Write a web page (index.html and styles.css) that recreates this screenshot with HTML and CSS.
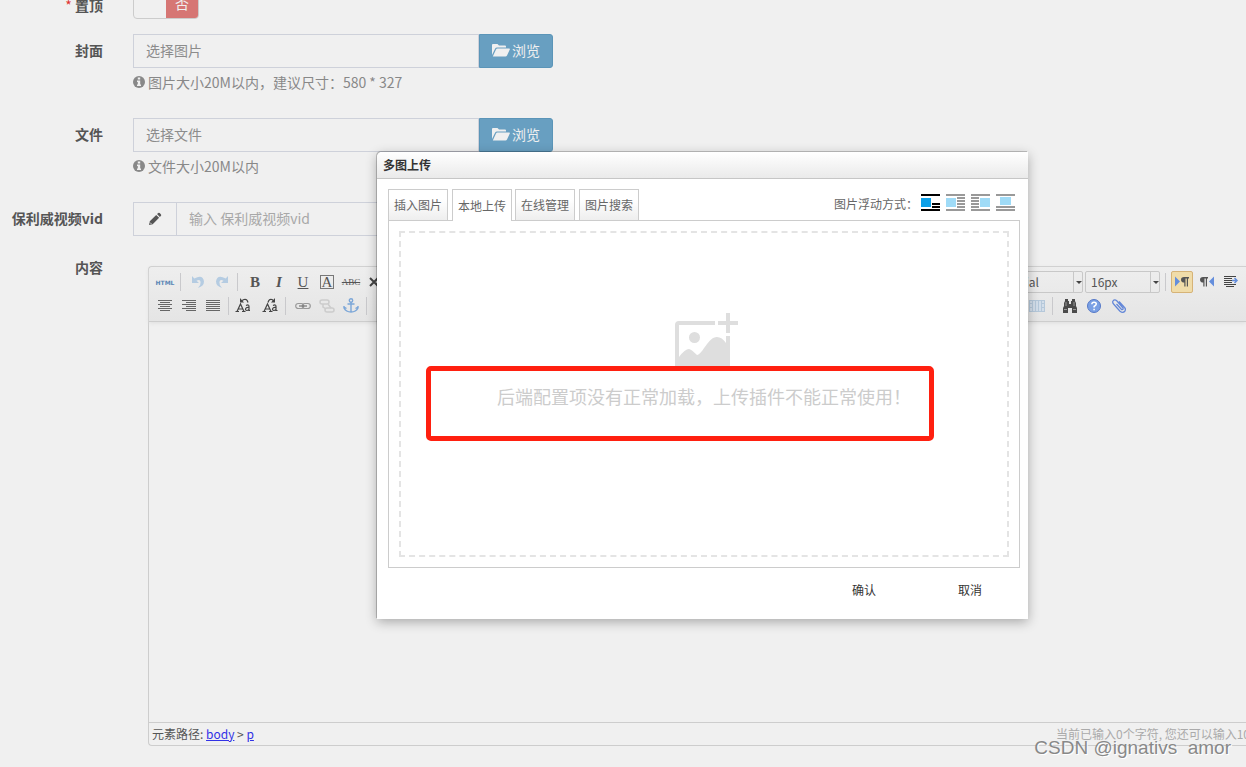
FILE: index.html
```html
<!DOCTYPE html>
<html lang="zh-CN">
<head>
<meta charset="utf-8">
<title>多图上传</title>
<link rel="stylesheet" href="styles.css">
</head>
<body>
<svg class="defs" aria-hidden="true">
  <symbol id="folder" viewBox="0 0 18 14"><path d="M0 12V2Q0 1 1 1H5.500L7 2.500H13Q14 2.500 14 3.500V4.500H5Q3.800 4.500 3.200 5.500Z"/><path d="M.8 13.500L4 6.500Q4.400 5.500 5.500 5.500H17.200Q18.200 5.500 17.800 6.500L15 12.500Q14.500 13.500 13.500 13.500Z"/></symbol>
  <symbol id="info" viewBox="0 0 12 12"><circle cx="6" cy="6" r="6"/><path fill="#f0f0f0" d="M4.800 1.500H7.200V3.500H4.800ZM4 4.500H7.200V8.500H8V10H4V8.500H4.800V6H4Z"/></symbol>
</svg>

<main class="page">
  <form class="form">
    <div class="row row-switch">
      <label class="label" for="top"><span class="required">*</span> 置顶</label>
      <div class="field"><button type="button" id="top" class="switch" aria-pressed="false"><span></span><span class="switch-off">否</span></button></div>
    </div>
    <div class="row">
      <label class="label" for="cover">封面</label>
      <div class="field">
        <div class="group">
          <input id="cover" class="input" type="text" placeholder="选择图片">
          <button type="button" class="browse"><svg width="18" height="14"><use href="#folder"/></svg>浏览</button>
        </div>
        <p class="help"><svg width="12" height="12"><use href="#info"/></svg>图片大小20M以内，建议尺寸：580 * 327</p>
      </div>
    </div>
    <div class="row">
      <label class="label" for="file">文件</label>
      <div class="field">
        <div class="group">
          <input id="file" class="input" type="text" placeholder="选择文件">
          <button type="button" class="browse"><svg width="18" height="14"><use href="#folder"/></svg>浏览</button>
        </div>
        <p class="help"><svg width="12" height="12"><use href="#info"/></svg>文件大小20M以内</p>
      </div>
    </div>
    <div class="row">
      <label class="label" for="vid">保利威视频vid</label>
      <div class="field">
        <div class="group">
          <span class="addon"><svg width="14" height="14" viewBox="0 0 14 14"><path fill="#555" d="M1 13L1.800 9.300L8.200 2.900L11.100 5.800L4.700 12.200ZM9 2.100L10.300 .9Q11 .5 11.700 1.100L13 2.400Q13.500 3 13 3.700L11.900 5Z"/><path d="M2 10.500L3.500 12" stroke="#f0f0f0" stroke-width=".8"/></svg></span>
          <input id="vid" class="input input-light" type="text" placeholder="输入 保利威视频vid">
        </div>
      </div>
    </div>
    <div class="row">
      <span class="label">内容</span>
      <div class="field">
        <div class="editor">
          <div class="toolbar">
            <div class="tools">
              <div class="tool-row">
                <button type="button" class="tool tool-html">HTML</button>
                <i class="sep"></i>
                <button type="button" class="tool" aria-label="撤销"><svg width="16" height="16" viewBox="0 0 16 16"><path fill="#b5cce2" d="M2 2V9H9L6.500 6.800Q10 4.500 10.600 8Q11 11 8 14Q14 12 14 7.500Q13 0 4.300 4.500Z"/></svg></button>
                <button type="button" class="tool" aria-label="重做"><svg width="16" height="16" viewBox="0 0 16 16"><path fill="#b5cce2" d="M14 2V9H7L9.500 6.800Q6 4.500 5.400 8Q5 11 8 14Q2 12 2 7.500Q3 0 11.700 4.500Z"/></svg></button>
                <i class="sep"></i>
                <button type="button" class="tool serif"><b>B</b></button>
                <button type="button" class="tool serif"><b><em>I</em></b></button>
                <button type="button" class="tool serif"><u>U</u></button>
                <button type="button" class="tool serif"><span class="boxed">A</span></button>
                <button type="button" class="tool serif"><s>ABC</s></button>
                <button type="button" class="tool" aria-label="清除格式"><svg width="16" height="16" viewBox="0 0 16 16"><path d="M3 4L11 12M11 4L3 12" stroke="#444" stroke-width="2"/></svg></button>
              </div>
              <div class="tool-row">
                <button type="button" class="tool" aria-label="居中"><svg width="16" height="16" viewBox="0 0 16 16"><path d="M1 2.500H15M3 4.500H13M1 6.500H15M3 8.500H13M1 10.500H15M3 12.500H13" stroke="#666"/></svg></button>
                <button type="button" class="tool" aria-label="居右"><svg width="16" height="16" viewBox="0 0 16 16"><path d="M1 2.500H15M5 4.500H15M1 6.500H15M5 8.500H15M1 10.500H15M5 12.500H15" stroke="#666"/></svg></button>
                <button type="button" class="tool" aria-label="两端对齐"><svg width="16" height="16" viewBox="0 0 16 16"><path d="M1 2.500H15M1 4.500H15M1 6.500H15M1 8.500H15M1 10.500H15M1 12.500H15" stroke="#666"/></svg></button>
                <i class="sep"></i>
                <button type="button" class="tool" aria-label="字母大写"><svg width="22" height="16" viewBox="0 0 22 16"><g fill="none" stroke="#444" stroke-width="1.200"><path d="M2 13.500L5.500 6L9 13.500M3.500 11H8M.5 13.500H4M7 13.500H10.500M11 7.500Q14 6 14 8.500V13M14 9.500Q10.500 9 10.500 11.500Q11.500 13.500 14 11.500M14 12.500H15M13 4.500Q12 .5 9 1.500L6 3"/></g><path fill="#444" d="M5 0V4.500H9Z"/></svg></button>
                <button type="button" class="tool" aria-label="字母小写"><svg width="22" height="16" viewBox="0 0 22 16"><g fill="none" stroke="#444" stroke-width="1.200"><path d="M5 13.500L8.500 6L12 13.500M6.500 11H11M3.500 13.500H7M10 13.500H13.500M14 7.500Q17 6 17 8.500V13M17 9.500Q13.500 9 13.500 11.500Q14.500 13.500 17 11.500M17 12.500H18.500M9 4.500Q10 .5 13 1.500L15 3"/></g><path fill="#444" d="M16 0V4.500H12Z"/></svg></button>
                <i class="sep"></i>
                <button type="button" class="tool" aria-label="超链接"><svg width="16" height="16" viewBox="0 0 16 16"><g fill="none" stroke="#999" stroke-width="1.200"><rect x=".7" y="5.500" width="8" height="5" rx="2.500"/><rect x="7.300" y="5.500" width="8" height="5" rx="2.500"/><path d="M4 8H12" stroke="#777"/></g></svg></button>
                <button type="button" class="tool" aria-label="取消链接"><svg width="16" height="16" viewBox="0 0 16 16"><g fill="none" stroke="#ccc" stroke-width="1.500"><rect x="1" y="2" width="9" height="4" rx="2"/><rect x="6" y="10" width="9" height="4" rx="2"/><path d="M4 6V9L7 11M9 6L12 10"/></g></svg></button>
                <button type="button" class="tool" aria-label="锚点"><svg width="16" height="16" viewBox="0 0 16 16"><g fill="none" stroke="#7ba6d8" stroke-width="1.400"><circle cx="8" cy="2.500" r="1.700"/><path d="M8 4V14M4.500 6H11.500M1 8V10Q3 14 8 14Q13 14 15 10V8M1 9L3.500 10.500M15 9L12.500 10.500"/></g></svg></button>
                <i class="sep"></i>
              </div>
            </div>
            <div class="tools tools-end">
              <div class="tool-row">
                <span class="combo combo-font"><select aria-label="字体"><option>arial</option></select></span>
                <span class="combo combo-size"><select aria-label="字号"><option>16px</option></select></span>
                <i class="sep"></i>
                <button type="button" class="tool tool-active" aria-label="从左向右"><svg width="16" height="16" viewBox="0 0 16 16"><path fill="#648edc" d="M1 2.500L6 7.500L1 12.500Z"/><path fill="#555" d="M15 3V4.500H14V12.500H12.800V4.500H11.500V12.500H10.300V8.500Q7 8.500 7 5.700Q7 3 10 3Z"/></svg></button>
                <button type="button" class="tool" aria-label="从右向左"><svg width="16" height="16" viewBox="0 0 16 16"><path fill="#648edc" d="M15 2.500L10 7.500L15 12.500Z"/><path fill="#555" d="M9 3V4.500H8V12.500H6.800V4.500H5.500V12.500H4.300V8.500Q1 8.500 1 5.700Q1 3 4 3Z"/></svg></button>
                <button type="button" class="tool" aria-label="首行缩进"><svg width="16" height="16" viewBox="0 0 16 16"><path d="M1 2.500H13M1 4.500H9M1 6.500H9M1 8.500H9M1 10.500H13M3 12.500H11" stroke="#444"/><path d="M9 6.500H14M11.500 4L14 6.500L11.500 9" fill="none" stroke="#648edc" stroke-width="1.500"/></svg></button>
              </div>
              <div class="tool-row tool-row-inset">
                <button type="button" class="tool" aria-label="表格"><svg width="16" height="14" viewBox="0 0 16 14"><path fill="#d3deea" d="M0 1H16V13H0Z"/><path d="M.5 1V13M3.500 1V13M6.500 1V13M9.500 1V13M12.500 1V13M15.500 1V13M0 1.500H16M0 12.500H16M0 4.500H3M13 4.500H16M0 8.500H3M13 8.500H16" stroke="#b5c8da"/></svg></button>
                <i class="sep"></i>
                <button type="button" class="tool" aria-label="查询替换"><svg width="16" height="16" viewBox="0 0 16 16"><path fill="#4b4b4b" d="M3 1H6V3H7V6H9V3H10V1H13V3L14 5V8L15 10V15H10V10H6V15H1V10L2 8V5L3 3Z"/><path d="M2 11.500H5M11 11.500H14M4 4V8M12 4V8" stroke="#999"/></svg></button>
                <button type="button" class="tool" aria-label="帮助"><svg width="16" height="16" viewBox="0 0 16 16"><circle cx="8" cy="8" r="6.500" fill="#7aa0e4" stroke="#5679c8"/><path d="M5.800 6.300Q6 4.200 8 4.200Q10.300 4.200 10.300 6Q10.300 7.200 8.100 8.500V9.500M8.100 10.700V12.200" fill="none" stroke="#fff" stroke-width="1.500"/></svg></button>
                <button type="button" class="tool" aria-label="附件"><svg width="16" height="16" viewBox="0 0 16 16"><path d="M6.500 6L11.500 11.500Q13.500 12 13 10L7 3Q4.500 .8 3 3Q2 4.500 4 6.500L10 13.300Q13 15.500 15 13Q16 11 14.500 9.500L9 3.500" fill="none" stroke="#6387d8" stroke-width="1.300"/></svg></button>
              </div>
            </div>
          </div>
          <div class="canvas" contenteditable="true" role="textbox" aria-label="内容"></div>
          <div class="status">
            <span>元素路径: <a href="#body">body</a> &gt; <a href="#p">p</a></span>
            <span class="count">当前已输入0个字符, 您还可以输入10</span>
          </div>
        </div>
      </div>
    </div>
  </form>

  <section class="dialog" role="dialog" aria-labelledby="dialog-title">
    <h2 id="dialog-title" class="dialog-title">多图上传</h2>
    <div class="dialog-body">
      <div class="dialog-head">
        <div class="tabs" role="tablist">
          <button type="button" role="tab" class="tab">插入图片</button>
          <button type="button" role="tab" class="tab tab-on" aria-selected="true">本地上传</button>
          <button type="button" role="tab" class="tab">在线管理</button>
          <button type="button" role="tab" class="tab">图片搜索</button>
        </div>
        <div class="float">
          <span class="float-label">图片浮动方式：</span>
          <button type="button" class="float-btn" aria-label="无浮动"><svg width="19" height="17"><path d="M0 0H19V2H0ZM11 9H19V11H11ZM11 12H19V14H11ZM0 15H19V17H0Z"/><path fill="#0da0e8" d="M0 4H10V13H0Z"/></svg></button>
          <button type="button" class="float-btn" aria-label="左浮动"><svg width="19" height="17"><path fill="#999" d="M0 0H19V2H0ZM11 3H19V5H11ZM11 6H19V8H11ZM11 9H19V11H11ZM11 12H19V14H11ZM0 15H19V17H0Z"/><path fill="#9fdbf7" d="M0 4H10V13H0Z"/></svg></button>
          <button type="button" class="float-btn" aria-label="右浮动"><svg width="19" height="17"><path fill="#999" d="M0 0H19V2H0ZM0 3H8V5H0ZM0 6H8V8H0ZM0 9H8V11H0ZM0 12H8V14H0ZM0 15H19V17H0Z"/><path fill="#9fdbf7" d="M9 4H19V13H9Z"/></svg></button>
          <button type="button" class="float-btn" aria-label="居中"><svg width="19" height="17"><path fill="#999" d="M0 0H19V2H0ZM0 12H19V14H0ZM0 15H19V17H0Z"/><path fill="#9fdbf7" d="M4 3H15V11H4Z"/></svg></button>
        </div>
      </div>
      <div class="panel">
        <div class="drop">
          <svg class="picture" width="70" height="54" viewBox="-6 0 70 54"><path fill="#dedede" d="M0 54V12Q0 8 4 8H40V12H4V44Q10 36 14 36Q16 36 22 42C28 41 33 24 42 24Q47 24 51 30V23H55V54ZM51 0H55V8H63V12H55V20H51V12H43V8H51Z"/><circle cx="19.500" cy="24.500" r="5.500" fill="#dedede"/></svg>
          <p class="message">后端配置项没有正常加载，上传插件不能正常使用！</p>
        </div>
      </div>
      <div class="actions">
        <button type="button" class="action">确认</button>
        <button type="button" class="action">取消</button>
      </div>
    </div>
    <div class="highlight"></div>
  </section>
  <div class="watermark">CSDN @ignativs&nbsp; amor</div>
</main>
</body>
</html>
```
FILE: styles.css
```css
* { box-sizing: border-box; }
body {
  margin: 0;
  background: #f0f0f0;
  color: #555;
  font: 14px/20px "Noto Sans CJK SC", sans-serif;
}
button, input, select { font: inherit; color: inherit; margin: 0; }
button { padding: 0; border: 0; background: none; }
.defs { position: absolute; width: 0; height: 0; }
.page { position: relative; min-height: 100vh; overflow: hidden; }

/* form */
.form { display: flex; flex-direction: column; gap: 15px; margin-top: -11px; }
.row { display: flex; align-items: flex-start; gap: 30px; }
.row-switch { height: 30px; }
.label { width: 103px; flex: none; text-align: right; font-weight: 700; line-height: 32px; white-space: nowrap; }
.required { color: #e03030; font-weight: 400; }
.field { flex: 1; min-width: 0; }
.group { display: flex; width: 420px; height: 34px; }
.input {
  flex: 1; min-width: 0; padding: 0 12px 2px;
  border: 1px solid #ced1da; border-radius: 0; background: transparent; outline: 0;
}
.input::placeholder { color: #8c8c8c; opacity: 1; }
.input-light::placeholder { color: #a8a8a8; }
.browse {
  display: flex; align-items: center; justify-content: center; gap: 2px;
  width: 74px; padding-bottom: 2px; color: #f0f0f0; background: #689fc1;
  border: 1px solid #5b95b8; border-radius: 0 3px 3px 0;
}
.browse svg, .help svg { fill: currentColor; }
.help { display: flex; align-items: center; gap: 3px; margin: 4px 0 11px; color: #888; }
.addon {
  display: flex; align-items: center; justify-content: center;
  width: 43px; border: 1px solid #ced1da; border-right: 0;
}
.switch {
  display: grid; grid-template-columns: 1fr 1fr; width: 66px; height: 30px;
  border: 1px solid #ccc; border-radius: 4px; overflow: hidden; line-height: 26px;
}
.switch-off { background: #d67674; color: #f0f0f0; }

/* editor */
.editor {
  margin: 15px 0 0 15px;
  border: 1px solid #cdcdcd; border-right: 0; border-radius: 4px 0 0 4px;
}
.toolbar {
  display: flex; justify-content: space-between; padding: 3px 3px 3px 4px;
  border-bottom: 1px solid #cdcdcd; border-radius: 4px 0 0 0;
  background: linear-gradient(#eee, #e5e5e5); box-shadow: 0 1px 4px #ddd;
}
.tools-end { width: 230px; flex: none; }
.tool-row { display: flex; align-items: center; height: 24px; }
.tool-row-inset { padding-left: 12px; }
.tool { display: flex; align-items: center; justify-content: center; width: 24px; height: 22px; flex: none; }
.tool svg { flex: none; }
.tool-html { color: #5a86b5; font: 700 6px "DejaVu Sans", sans-serif; }
.serif { color: #555; font: 15px/16px "Liberation Serif", serif; }
.boxed { width: 14px; height: 14px; border: 1px solid #777; line-height: 12px; }
.serif s { font-size: 9px; }
.tool-active { width: 22px; margin-right: 2px; background: #f0dca9; border: 1px solid #d6b377; border-radius: 2px; }
.sep { width: 9px; height: 18px; flex: none; }
.sep::before { content: ""; display: block; height: 18px; width: 1px; margin-left: 3px; background: #c9c9cc; }
.combo { position: relative; height: 22px; flex: none; border: 1px solid #c8c8c8; border-radius: 2px; font-size: 12px; }
.combo-font { width: 70px; margin-right: 2px; }
.combo-size { width: 75px; margin-right: 2px; }
.combo select { display: block; width: 100%; height: 20px; padding: 0 5px; border: 0; background: transparent; appearance: none; }
.combo-font select { padding-left: 0; }
.combo::before { content: ""; position: absolute; right: 8px; top: 0; height: 20px; border-left: 1px solid #c8c8c8; }
.combo::after { content: ""; position: absolute; right: 0; top: 9px; border: 3px solid transparent; border-top-color: #444; border-bottom: 0; }
.canvas { height: 400px; outline: 0; }
.status {
  display: flex; justify-content: space-between; height: 23px; padding-left: 3px;
  border-top: 1px solid #cdcdcd; font-size: 12px; line-height: 22px; white-space: nowrap;
}
.status a { color: #3232e6; }
.count { width: 190px; overflow: hidden; color: #aaa; }

/* dialog */
.dialog {
  position: absolute; left: 377px; top: 152px; width: 651px;
  background: #fff; border-radius: 5px 0 0 0;
  box-shadow: -1px -1px 0 rgba(0, 0, 0, .2), 0 3px 12px rgba(0, 0, 0, .3);
  font-size: 12px;
}
.dialog-title {
  margin: 0; padding-left: 6px; height: 27px; line-height: 26px;
  font-size: 12px; font-weight: 700; color: #333;
  border-bottom: 1px solid #c6c6c6; border-radius: 5px 0 0 0;
  background: linear-gradient(#fff, #eaeaea);
}
.dialog-body { padding: 10px 8px 16px 11px; }
.dialog-head { display: flex; justify-content: space-between; height: 31px; }
.tabs { display: flex; gap: 4px; }
.tab {
  width: 60px; height: 31px; color: #666;
  border: 1px solid #ccc; border-bottom: 0; background: linear-gradient(#fff 30%, #eee);
}
.tab-on { position: relative; z-index: 1; height: 32px; margin-right: -1px; background: #fff; }
.float { display: flex; align-items: center; gap: 6px; height: 27px; padding-right: 5px; }
.float-label { margin-right: -3px; padding-top: 3px; color: #666; }
.float-btn { display: flex; }
.panel { padding: 10px; border: 1px solid #ccc; }
.drop { height: 326px; padding-top: 80px; border: 2px dashed #e4e4e4; text-align: center; }
.picture { display: block; margin: 0 auto; }
.message { margin: 15px 0 0; color: #ccc; font-size: 18px; line-height: 28px; white-space: nowrap; }
.actions { display: flex; justify-content: flex-end; gap: 20px; padding: 10px 7px 1px 0; }
.action { width: 86px; height: 24px; color: #333; }
.highlight {
  position: absolute; left: 49px; top: 214px; width: 508px; height: 75px;
  border: 5px solid #ff2010; border-radius: 5px;
}
.watermark {
  position: absolute; right: 15px; bottom: 8px;
  font: 19px/22px "Liberation Sans", sans-serif; color: #888;
  text-shadow: 1px 1px 0 #fff; white-space: nowrap;
}
```
